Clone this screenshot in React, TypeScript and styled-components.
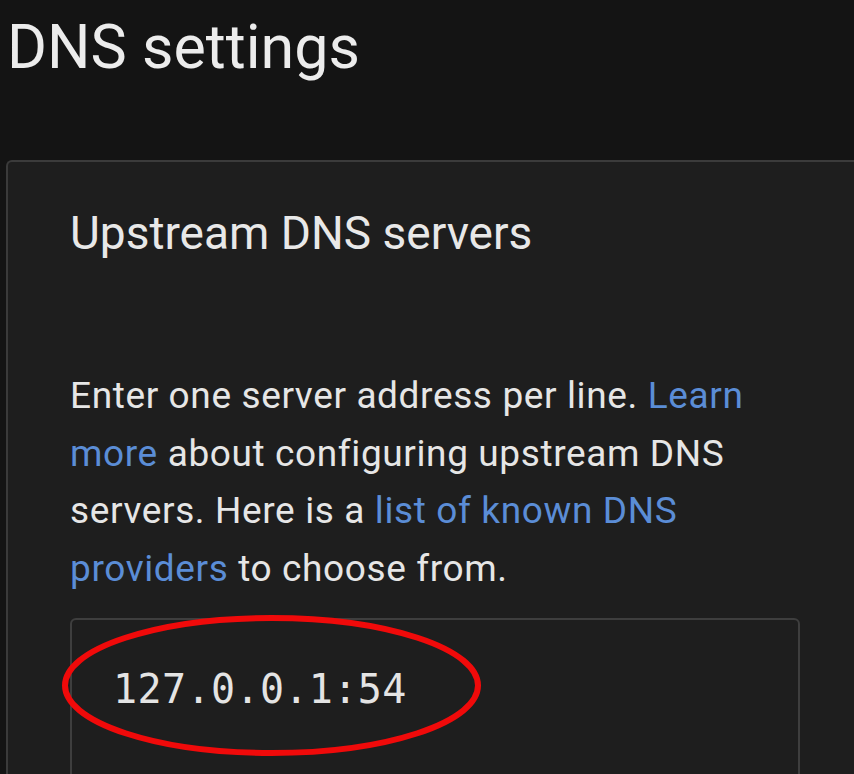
import React from "react";
import styled, { createGlobalStyle } from "styled-components";

const Global = createGlobalStyle`
  html, body {
    margin: 0;
    padding: 0;
    background: #141414;
    overflow: hidden;
  }
  body {
    font-family: Roboto, "Noto Sans", sans-serif;
    color: #e6e6e6;
  }
`;

const Page = styled.div`
  padding: 0 0 0 6px;
  width: 854px;
  height: 774px;
  box-sizing: border-box;
  overflow: hidden;
`;

const Title = styled.h1`
  margin: 0;
  padding: 10px 0 0 1px;
  font-size: 61px;
  font-weight: 400;
  line-height: 74px;
  color: #ececec;
`;

const Card = styled.section`
  margin-top: 76px;
  width: 900px;
  box-sizing: border-box;
  background: #1e1e1e;
  border: 2px solid #3b3b3b;
  border-right: none;
  border-radius: 6px 0 0 0;
  padding: 44px 0 0 62px;
  height: 700px;
`;

const CardTitle = styled.h2`
  margin: 0;
  font-size: 46px;
  font-weight: 400;
  line-height: 1.2;
  color: #e8e8e8;
`;

const Description = styled.p`
  margin: 106px 0 0 0;
  width: 730px;
  font-size: 37px;
  letter-spacing: 0.62px;
  line-height: 57.5px;
  color: #e6e6e6;
`;

const Link = styled.a`
  color: #5b8dd6;
  text-decoration: none;
`;

const FieldWrap = styled.div`
  position: relative;
  margin-top: 21px;
  width: 730px;
`;

const ServerList = styled.textarea`
  display: block;
  width: 100%;
  height: 220px;
  box-sizing: border-box;
  background: #1e1e1e;
  border: 2px solid #3e3e3e;
  border-radius: 6px;
  padding: 39px 0 0 41px;
  margin: 0;
  resize: none;
  outline: none;
  color: #e4e4e4;
  font-family: "DejaVu Sans Mono", monospace;
  font-size: 40px;
  letter-spacing: 0.4px;
  line-height: 1.5;
`;

const Annotation = styled.svg`
  position: absolute;
  left: -8px;
  top: -3px;
  pointer-events: none;
`;

export default function App() {
  return (
    <>
      <Global />
      <Page>
        <Title>DNS settings</Title>
        <Card>
          <CardTitle>Upstream DNS servers</CardTitle>
          <Description>
            Enter one server address per line. <Link href="#">Learn more</Link> about
            configuring upstream DNS servers. Here is a{" "}
            <Link href="#">list of known DNS providers</Link> to choose from.
          </Description>
          <FieldWrap>
            <ServerList defaultValue="127.0.0.1:54" spellCheck={false} />
            <Annotation width="420" height="142" viewBox="0 0 420 142">
              <ellipse cx="209.5" cy="70.5" rx="206.5" ry="67.5" fill="none" stroke="#f00a0a" strokeWidth="6" />
            </Annotation>
          </FieldWrap>
        </Card>
      </Page>
    </>
  );
}
